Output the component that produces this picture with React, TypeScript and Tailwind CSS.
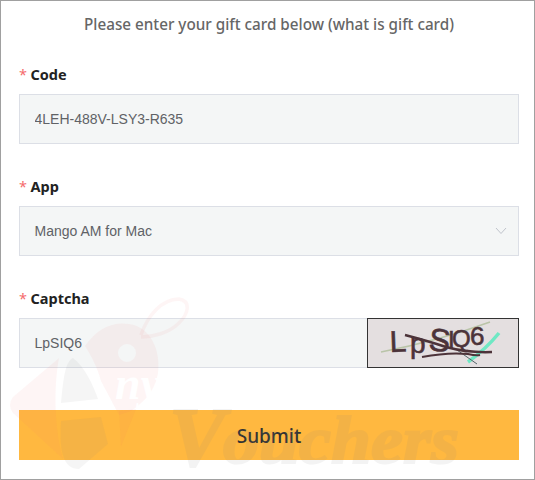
const INPUT =
  "h-[50px] w-full border border-[#dcdfe6] bg-[#f4f6f6] pl-[14.5px] pr-[15px] text-[14px] text-[#606266] outline-none";

function FieldLabel({ children }: { children: string }) {
  return (
    <label className="mb-[8px] flex h-[23px] items-center text-[14.5px] font-bold leading-[23px] text-[#222222]">
      <span className="mr-[3.5px] font-normal text-[#f56c6c]">*</span>
      {children}
    </label>
  );
}

function Watermark() {
  return (
    <svg
      className="pointer-events-none absolute left-0 top-0"
      width="535"
      height="480"
      viewBox="0 0 535 480"
      aria-hidden="true"
    >
      {/* tag, left of the A */}
      <path
        d="M58 357 L12 396 Q6 404 12 412 L62 458 C54 430 52 390 58 357 Z"
        fill="#f56c6c"
        opacity="0.07"
      />
      {/* bag head with its hole */}
      <path
        fillRule="evenodd"
        d="M84 345 C95 328 112 320 128 323 C150 326 160 350 157 372 C155 385 148 398 130 410 L118 414 L100 380 C96 365 90 355 84 345 Z M135 352 A9 9 0 1 0 117 352 A9 9 0 1 0 135 352 Z"
        fill="#f56c6c"
        opacity="0.07"
      />
      <path d="M118 410 L135 408 L120 446 Z" fill="#f56c6c" opacity="0.06" />
      {/* strap loop */}
      <path
        d="M140 334 C146 316 160 298 178 298 C190 300 188 312 178 322 C168 332 152 336 140 336"
        fill="none"
        stroke="#f56c6c"
        strokeWidth="3.5"
        opacity="0.07"
      />
      {/* A of the logo */}
      <path d="M60 402 C62 380 64 360 72 357 C84 366 92 384 97 398 Z" fill="#808080" opacity="0.08" />
      <path d="M60 420 L100 416 L107 443 L78 468 C62 468 58 450 60 420 Z" fill="#808080" opacity="0.08" />
      <text
        x="114"
        y="398"
        fill="#ffffff"
        fontFamily="'Liberation Serif', serif"
        fontStyle="italic"
        fontWeight="700"
        fontSize="46"
      >
        ny
      </text>
      <g
        fill="#808080"
        stroke="#808080"
        strokeWidth="2"
        opacity="0.09"
        fontFamily="'Liberation Serif', serif"
        fontStyle="italic"
        fontWeight="700"
      >
        <text x="168" y="465" fontSize="84">V</text>
        <text x="222" y="462" fontSize="68" textLength="236" lengthAdjust="spacingAndGlyphs">
          ouchers
        </text>
      </g>
    </svg>
  );
}

function Captcha() {
  return (
    <div className="h-[50px] w-[152px] shrink-0 border border-[#333333] bg-[#e4dfe0]">
      <svg width="150" height="48" viewBox="0 0 150 48">
        <path d="M13 33 Q70 22 122 3" fill="none" stroke="#b9c4a8" strokeWidth="1.5" />
        <path d="M100 43 Q118 30 131 14" fill="none" stroke="#6fe8c4" strokeWidth="3.5" />
        <path d="M89 31 L109 45" fill="none" stroke="#55666a" strokeWidth="1" />
        <g fill="#4c3339" stroke="#4c3339" strokeWidth="0.6" fontFamily="'Liberation Sans', sans-serif">
          <text x="22" y="33" fontSize="30" transform="rotate(-2 22 33)">L</text>
          <text x="42" y="34" fontSize="28">p</text>
          <text x="60" y="31" fontSize="32" transform="rotate(6 60 31)">S</text>
          <text x="80" y="29" fontSize="24">I</text>
          <text x="84" y="28" fontSize="24">Q</text>
          <text x="102" y="26" fontSize="26">6</text>
        </g>
        <path
          d="M37 16 Q60 22 78 28 Q100 34 124 33"
          fill="none"
          stroke="#4c3339"
          strokeWidth="2.5"
        />
        <path d="M54 38 Q80 33 100 35 Q108 37 112 36" fill="none" stroke="#4c3339" strokeWidth="2" />
      </svg>
    </div>
  );
}

export default function App() {
  return (
    <div className="relative h-[480px] w-[535px] overflow-hidden border border-[#a0a0a0] bg-white pl-[18px] pr-[15px] font-['Noto_Sans',sans-serif]">
      <h1 className="mb-[27px] mt-[11px] h-[24px] text-center text-[15.25px] font-medium leading-[24px] text-[#666666]">
        Please enter your gift card below (what is gift card)
      </h1>

      <form className="flex flex-col" onSubmit={(e) => e.preventDefault()}>
        <FieldLabel>Code</FieldLabel>
        <input className={`${INPUT} font-['Liberation_Sans',sans-serif]`} defaultValue="4LEH-488V-LSY3-R635" />

        <div className="mt-[31px]">
          <FieldLabel>App</FieldLabel>
          <div className={`${INPUT} flex items-center justify-between !pr-[11px] font-['Liberation_Sans',sans-serif]`}>
            <span>Mango AM for Mac</span>
            <svg width="12" height="8" viewBox="0 0 12 8" fill="none" stroke="#c0c4cc" strokeWidth="1">
              <path d="M1 1 L6 6.5 L11 1" />
            </svg>
          </div>
        </div>

        <div className="mt-[31px]">
          <FieldLabel>Captcha</FieldLabel>
          <div className="flex">
            <input className={`${INPUT} min-w-0 flex-1 border-r-0 font-['Liberation_Sans',sans-serif]`} defaultValue="LpSIQ6" />
            <Captcha />
          </div>
        </div>

        <button
          type="submit"
          className="mt-[42px] h-[50px] w-full bg-[#ffb840] pt-[2px] text-[19px] font-medium text-[#333333]"
        >
          Submit
        </button>
      </form>

      <Watermark />
    </div>
  );
}
